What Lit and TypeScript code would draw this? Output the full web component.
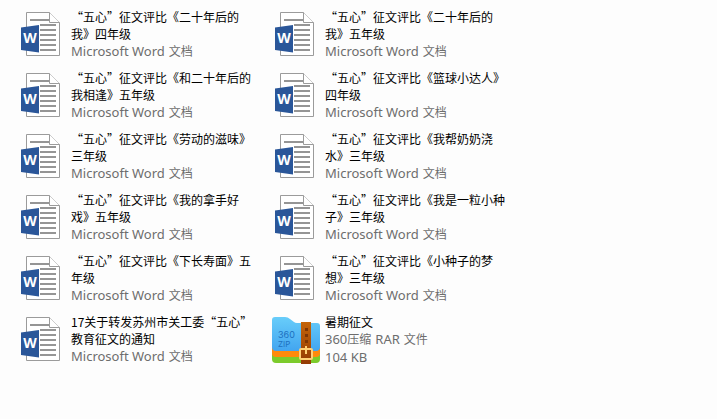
import { LitElement, html, css, svg } from "lit";
import { customElement, property } from "lit/decorators.js";

interface FileEntry {
  name: string;
  kind: "word" | "archive";
  size?: string;
}

const files: FileEntry[] = [
  { name: "“五心”征文评比《二十年后的我》四年级", kind: "word" },
  { name: "“五心”征文评比《二十年后的我》五年级", kind: "word" },
  { name: "“五心”征文评比《和二十年后的我相逢》五年级", kind: "word" },
  { name: "“五心”征文评比《篮球小达人》四年级", kind: "word" },
  { name: "“五心”征文评比《劳动的滋味》三年级", kind: "word" },
  { name: "“五心”征文评比《我帮奶奶浇水》三年级", kind: "word" },
  { name: "“五心”征文评比《我的拿手好戏》五年级", kind: "word" },
  { name: "“五心”征文评比《我是一粒小种子》三年级", kind: "word" },
  { name: "“五心”征文评比《下长寿面》五年级", kind: "word" },
  { name: "“五心”征文评比《小种子的梦想》三年级", kind: "word" },
  { name: "17关于转发苏州市关工委“五心”教育征文的通知", kind: "word" },
  { name: "暑期征文", kind: "archive", size: "104 KB" },
];

const wordIcon = svg`
  <path d="M8.5 1.5H31.5L41.5 11.5V44.5H8.5Z" fill="#fff" stroke="#9b9b9b"/>
  <path d="M31.5 1.5V11.5H41.5" fill="#fff" stroke="#9b9b9b"/>
  <path d="M12 9H31M22 14H38M22 19H38M22 24H38M22 29H38M22 34H38M22 39H38" stroke="#959595" stroke-width="2"/>
  <path d="M3 16.5L21 14V41.5L3 39Z" fill="#2a5699"/>
  <text class="letter" x="12" y="32" text-anchor="middle">W</text>
`;

const archiveIcon = svg`
  <defs>
    <linearGradient id="folder" x1="0" y1="0" x2="0" y2="1">
      <stop offset="0" stop-color="#68cdfa"/>
      <stop offset="1" stop-color="#42a5f0"/>
    </linearGradient>
    <linearGradient id="strap" x1="0" y1="0" x2="0" y2="1">
      <stop offset="0" stop-color="#c46408"/>
      <stop offset="1" stop-color="#933a04"/>
    </linearGradient>
  </defs>
  <path d="M0 30H48V43Q48 47 44 47H4Q0 47 0 43Z" fill="#7ccb2b"/>
  <path d="M0 28H48V37Q48 41 44 41H4Q0 41 0 37Z" fill="#ff8a0c"/>
  <path d="M0 4Q0 1 3 1H13Q16 1 18 3L22 6Q23 7 25 7H45Q48 7 48 10V31Q48 35 44 35H4Q0 35 0 31Z" fill="url(#folder)"/>
  <text class="brand" x="6" y="22">360</text>
  <text class="brand small" x="6" y="31">ZIP</text>
  <path d="M29 6H39V48H29Z" fill="url(#strap)"/>
  <path d="M33 12h3v3h-3ZM33 18h3v3h-3ZM33 24h3v3h-3Z" fill="#7e3604"/>
  <rect x="28" y="33" width="12" height="10" rx="1" fill="none" stroke="#ffcf75" stroke-width="2"/>
  <path d="M34 30V38" stroke="#ffcf75" stroke-width="2"/>
`;

@customElement("file-tile")
export class FileTile extends LitElement {
  @property({ attribute: false }) file!: FileEntry;

  static styles = css`
    :host {
      display: flex;
      gap: 5px;
    }
    .icon {
      flex: none;
      width: 48px;
      height: 48px;
      margin-top: 3px;
    }
    .letter {
      font: bold 14px "Noto Sans", sans-serif;
      fill: #fff;
    }
    .brand {
      font: 9px "Inter", sans-serif;
      fill: #1d70c0;
    }
    .small {
      font-size: 8px;
    }
    .text {
      width: 184px;
    }
    .name,
    .detail {
      margin: 0;
      font-size: 12px;
      text-spacing-trim: space-all;
    }
    .name {
      font-family: "Noto Sans CJK SC", sans-serif;
      line-height: 17px;
      color: #000;
    }
    .detail {
      display: flex;
      align-items: baseline;
      gap: 4px;
      height: 18px;
      font-family: "Noto Sans", "Noto Sans CJK SC", sans-serif;
      line-height: 18px;
      color: #6d6d6d;
      white-space: nowrap;
    }
    .latin {
      font-size: 13px;
    }
  `;

  render() {
    const { name, kind, size } = this.file;
    return html`
      <svg class="icon" viewBox="0 0 48 48" aria-hidden="true">
        ${kind === "word" ? wordIcon : archiveIcon}
      </svg>
      <div class="text">
        <p class="name">${name}</p>
        ${kind === "word"
          ? html`<p class="detail"><span class="latin">Microsoft Word</span><span>文档</span></p>`
          : html`<p class="detail">
              <span><span class="latin">360</span>压缩</span><span class="latin">RAR</span><span>文件</span>
            </p>`}
        ${size ? html`<p class="detail"><span class="latin">${size}</span></p>` : null}
      </div>
    `;
  }
}

@customElement("app-root")
export class AppRoot extends LitElement {
  static styles = css`
    :host {
      display: block;
      min-height: 100vh;
      box-sizing: border-box;
      padding: 8px 18px;
      background: #fdfdfd;
    }
    .files {
      display: grid;
      grid-template-columns: repeat(2, 237px);
      gap: 9px 17px;
      margin: 0;
      padding: 0;
      list-style: none;
    }
    .row {
      min-height: 52px;
    }
  `;

  render() {
    return html`
      <ul class="files" lang="zh-CN">
        ${files.map((file) => html`<li class="row"><file-tile .file=${file}></file-tile></li>`)}
      </ul>
    `;
  }
}
